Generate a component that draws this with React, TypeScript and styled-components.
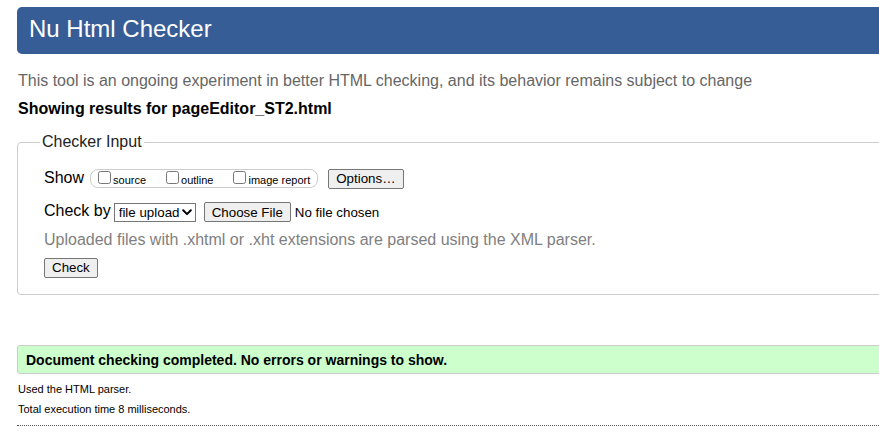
import React from "react";
import styled, { createGlobalStyle } from "styled-components";

const GlobalStyle = createGlobalStyle`
  html, body {
    margin: 0;
    padding: 0;
    overflow: hidden;
    background: #fff;
  }
  body {
    font-family: "Liberation Sans", Arial, sans-serif;
    color: #000;
  }
`;

const Page = styled.div`
  width: 1000px;
  padding: 7px 0 0 17px;
`;

const Title = styled.h1`
  margin: 0;
  padding: 8px 12px 11px;
  line-height: 28px;
  font-size: 24px;
  font-weight: normal;
  color: #fff;
  background: #365d95;
  border-radius: 5px;
`;

const Intro = styled.p`
  margin: 18px 0 0 1px;
  font-size: 16px;
  line-height: 18px;
  color: #666;
`;

const ResultsFor = styled.h2`
  margin: 10px 0 0 1px;
  font-size: 16px;
  line-height: 18px;
  font-weight: bold;
`;

const Fieldset = styled.fieldset`
  margin: 15px 0 0;
  padding: 18px 0 16px 26px;
  border: 1px solid #ccc;
  border-radius: 4px;
`;

const Legend = styled.legend`
  margin-left: -4px;
  padding: 0 2px;
  font-size: 16px;
  line-height: 18px;
  color: #222;
`;

const Row = styled.div<{ $top?: number }>`
  display: flex;
  align-items: flex-start;
  margin-top: ${(p) => p.$top ?? 0}px;
`;

const Label = styled.span`
  font-size: 16px;
  line-height: 18px;
  margin-right: 6px;
`;

const Group = styled.div`
  display: inline-flex;
  align-items: center;
  gap: 20px;
  height: 19px;
  box-sizing: border-box;
  padding: 0 7px;
  border: 1px solid #ccc;
  border-radius: 8px;
`;

const Option = styled.label`
  display: inline-flex;
  align-items: baseline;
  gap: 2px;
  font-size: 11px;
  line-height: 13px;
`;

const Box = styled.input`
  margin: 0;
  width: 13px;
  height: 13px;
`;

const Button = styled.button<{ $left?: number }>`
  margin: 0 0 0 ${(p) => p.$left ?? 0}px;
  height: 20px;
  padding: 0 7px;
  font-family: "Liberation Sans", Arial, sans-serif;
  font-size: 13.33px;
  line-height: 16px;
  color: #000;
  background: #efefef;
  border: 1px solid #767676;
  border-radius: 2px;
`;

const SelectWrap = styled.span`
  position: relative;
  display: inline-flex;
  margin: 1px 0 0 -3px;
`;

const Select = styled.select`
  appearance: none;
  -webkit-appearance: none;
  box-sizing: border-box;
  width: 82px;
  height: 19px;
  margin: 0;
  padding: 0 14px 0 4px;
  font-family: "Liberation Sans", Arial, sans-serif;
  font-size: 13.33px;
  line-height: 17px;
  color: #000;
  background: #fff;
  border: 1px solid #767676;
  border-radius: 0;
`;

const Chevron = styled.svg`
  position: absolute;
  right: 4px;
  top: 6px;
  width: 10px;
  height: 7px;
  pointer-events: none;
`;

const FileInput = styled.input`
  margin-left: 8px;
  font-family: "Liberation Sans", Arial, sans-serif;
  font-size: 13.33px;
  line-height: 20px;
  color: #000;
  &::file-selector-button {
    height: 20px;
    margin: 0 4px 0 0;
    padding: 0 7px;
    font-family: "Liberation Sans", Arial, sans-serif;
    font-size: 13.33px;
    color: #000;
    background: #efefef;
    border: 1px solid #767676;
    border-radius: 2px;
  }
`;

const Help = styled.p`
  margin: 8px 0 0;
  font-size: 16px;
  line-height: 18px;
  color: #808080;
`;

const CheckRow = styled.div`
  margin-top: 9px;
`;

const Success = styled.div`
  margin-top: 50px;
  padding: 6px 8px 5px;
  border: 1px solid #ccc;
  border-radius: 3px;
  background: #ccffcc;
  font-size: 14px;
  line-height: 16px;
  font-weight: bold;
`;

const Detail = styled.p<{ $top: number }>`
  margin: ${(p) => p.$top}px 0 0 1px;
  font-size: 11px;
  line-height: 20px;
`;

const Rule = styled.hr`
  margin: 6px 0 0;
  border: 0;
  border-top: 1px dotted #555;
  height: 0;
`;

export default function App() {
  return (
    <>
      <GlobalStyle />
      <Page>
        <Title>Nu Html Checker</Title>
        <Intro>
          This tool is an ongoing experiment in better HTML checking, and its
          behavior remains subject to change
        </Intro>
        <ResultsFor>Showing results for pageEditor_ST2.html</ResultsFor>
        <Fieldset>
          <Legend>Checker Input</Legend>
          <Row>
            <Label>Show</Label>
            <Group>
              <Option>
                <Box type="checkbox" />
                source
              </Option>
              <Option>
                <Box type="checkbox" />
                outline
              </Option>
              <Option>
                <Box type="checkbox" />
                image report
              </Option>
            </Group>
            <Button $left={10}>Options…</Button>
          </Row>
          <Row $top={13}>
            <Label>Check by</Label>
            <SelectWrap>
              <Select defaultValue="file">
                <option value="file">file upload</option>
                <option value="address">address</option>
                <option value="text">text input</option>
              </Select>
              <Chevron viewBox="0 0 10 7">
                <path
                  d="M1.2 1.3 L5 5.1 L8.8 1.3"
                  fill="none"
                  stroke="#000"
                  strokeWidth="2"
                  strokeLinecap="round"
                  strokeLinejoin="round"
                />
              </Chevron>
            </SelectWrap>
            <FileInput type="file" />
          </Row>
          <Help>
            Uploaded files with .xhtml or .xht extensions are parsed using the
            XML parser.
          </Help>
          <CheckRow>
            <Button>Check</Button>
          </CheckRow>
        </Fieldset>
        <Success>
          Document checking completed. No errors or warnings to show.
        </Success>
        <Detail $top={5}>Used the HTML parser.</Detail>
        <Detail $top={0}>Total execution time 8 milliseconds.</Detail>
        <Rule />
      </Page>
    </>
  );
}
